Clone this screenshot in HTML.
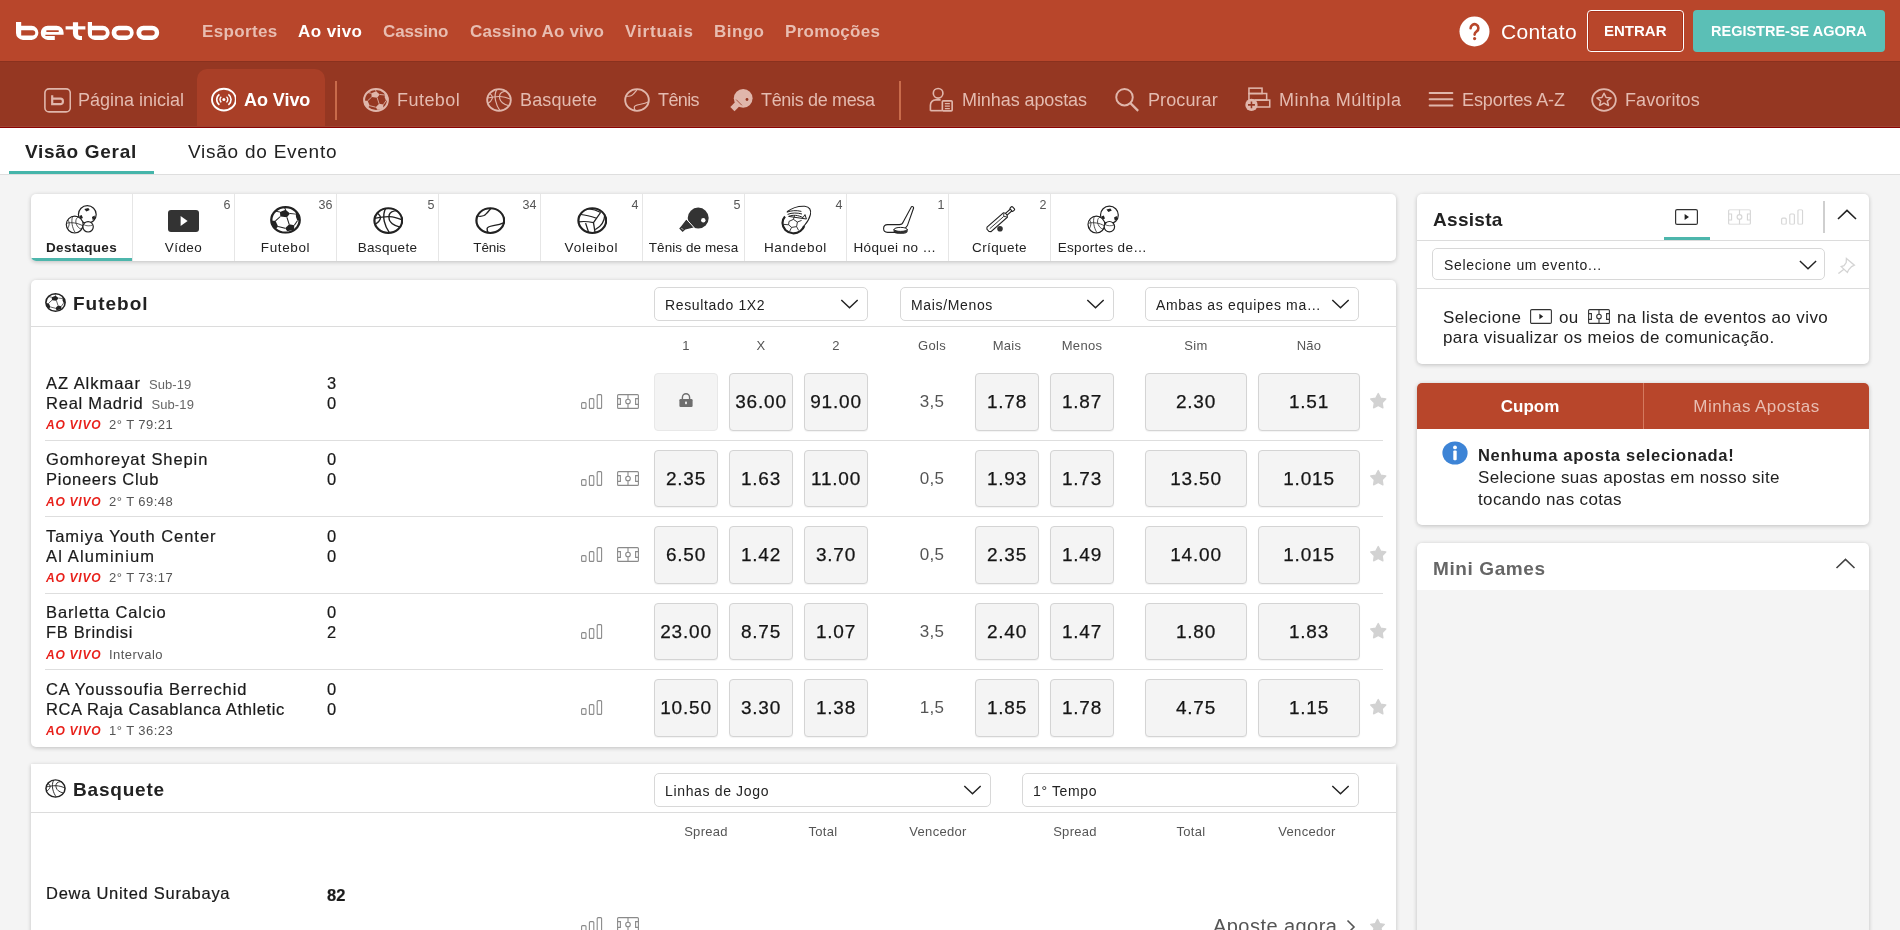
<!DOCTYPE html>
<html><head><meta charset="utf-8">
<style>
*{box-sizing:border-box;margin:0;padding:0}
html,body{width:1900px;height:930px;overflow:hidden;background:#f4f4f4;font-family:"Liberation Sans",sans-serif;color:#222;position:relative}
.abs{position:absolute}
.card,#top,#nav2,#tabs{will-change:transform}
.t{position:absolute;white-space:nowrap}
#top{position:absolute;left:0;top:0;width:1900px;height:61px;background:#b8462b}
#nav2{position:absolute;left:0;top:61px;width:1900px;height:66px;background:#953722;border-top:1px solid #8a311e}
#redline{position:absolute;left:0;top:126px;width:1900px;height:1px;background:#9c4431;border-bottom:1px solid #8c0202;height:2px}
#redshadow{position:absolute;left:0;top:128px;width:1900px;height:1px;background:rgba(80,0,0,.12)}
.tn{position:absolute;top:22.3px;font-size:17px;font-weight:700;color:#e8bdb1;white-space:nowrap;line-height:20px}
.n2{position:absolute;top:27.7px;font-size:18px;color:#e4bbb0;white-space:nowrap;line-height:20px}
.n2i{position:absolute;top:25px;width:26px;height:25px;color:#e0b6ab}
#tabs{position:absolute;left:0;top:128px;width:1900px;height:47px;background:#fff;border-bottom:1px solid #dedede}
.card{position:absolute;background:#fff;border-radius:5px;box-shadow:0 1px 4px rgba(0,0,0,.22)}
.cl{position:absolute;top:45.7px;text-align:center;font-size:13.5px;line-height:16px;color:#222;white-space:nowrap;letter-spacing:.3px}
.cc{position:absolute;top:4px;width:30px;text-align:right;font-size:12.5px;line-height:14px;color:#555}
.sel{position:absolute;height:34px;border:1px solid #d8d8d8;border-radius:5px;background:#fff}
.lab{position:absolute;width:80px;text-align:center;font-size:13px;line-height:16px;color:#555;letter-spacing:.3px}
.tm{position:absolute;font-size:16.5px;line-height:19px;color:#1a1a1a;-webkit-text-stroke:.2px #1a1a1a;white-space:nowrap;letter-spacing:.7px}
.tm .sub{font-size:13px;color:#666;-webkit-text-stroke:0;margin-left:8px;letter-spacing:.1px}
.sc{position:absolute;font-size:16.5px;line-height:19px;color:#1a1a1a;-webkit-text-stroke:.2px #1a1a1a}
.odd{position:absolute;height:57.5px;background:#f4f4f4;border:1px solid #d4d4d4;border-radius:4px;text-align:center;font-size:19px;line-height:55.5px;color:#151515;-webkit-text-stroke:.25px #151515;letter-spacing:.8px;box-shadow:0 1px 1px rgba(0,0,0,.05)}
.odd.lock{border-color:#e8e8e8;box-shadow:none}
.gols{position:absolute;width:60px;text-align:center;font-size:17px;line-height:20px;color:#555;letter-spacing:.3px}
</style></head><body>

<svg width="0" height="0" style="position:absolute">
<defs>
  <symbol id="ball" viewBox="0 0 26 26">
    <circle cx="13" cy="13" r="11.9" fill="none" stroke="currentColor" stroke-width="2"/>
    <path d="M8.3 5.7 L13.1 3.6 L16.8 7 L14.2 10.6 L8.7 9.8 Z" fill="currentColor"/>
    <path d="M21.6 5 L24.2 8.6 L25 13.4 L23 13.8 L21.8 10.2 Z" fill="currentColor"/>
    <path d="M1.2 13.9 L4.6 13.9 L6.8 19.2 L5 21.2 L2.2 18.6 Z" fill="currentColor"/>
    <path d="M12.7 20.8 L16.1 17.1 L20.4 18 L20.1 22.1 L14.5 23.6 Z" fill="currentColor"/>
    <path d="M13.1 3.6 L12.2 1.4 M16.8 7 L21.8 7.6 M14.2 10.6 L16.1 17.1 M8.7 9.8 L4.6 13.9 M6.8 19.2 L12.7 20.8 M20.4 18 L23 13.8 M8.3 5.7 L4.2 4.8" stroke="currentColor" stroke-width="0.9" fill="none"/>
  </symbol>
  <symbol id="bask" viewBox="0 0 26 26" fill="none" stroke="currentColor" stroke-width="1.9">
    <circle cx="13" cy="13" r="11.8"/>
    <path d="M1.3 10.9 C5 10 10 9 14 9.2 C18 9.4 21.6 10.8 24.9 12.3" stroke-width="1.2"/>
    <path d="M3.2 5.5 C5.6 7.4 6.8 9.6 6.2 11.4 C5.6 13.6 3.8 15.4 1.7 16.8" stroke-width="1.2"/>
    <path d="M10.7 1.5 C9 5 8.8 9.6 9.6 13.8 C10.4 18 12 21.6 14 24.7" stroke-width="1.2"/>
    <path d="M20.8 3.4 C17.4 3.6 14.6 4.4 13.8 7.4 C13 10.8 14.2 14 16.4 16 C18.2 17.6 20.6 18.6 23 19.3" stroke-width="1.2"/>
  </symbol>
  <symbol id="tennis" viewBox="0 0 26 26" fill="none" stroke="currentColor" stroke-width="1.9">
    <circle cx="13" cy="13" r="11.8"/>
    <path d="M13.6 1.2 C11.4 4 9.6 7 7.6 8.2 C5.8 9.2 3.8 9 1.6 8.6" stroke-width="1.2"/>
    <path d="M24.8 14.9 C21.6 16.6 18.6 17.2 15.5 17.8 C12.4 18.4 10.4 19.2 10.3 20.6 C10.2 22 10.6 23.4 11.2 24.6" stroke-width="1.2"/>
  </symbol>
  <symbol id="volley" viewBox="0 0 26 26" fill="none" stroke="currentColor" stroke-width="1.9">
    <circle cx="13" cy="13" r="11.8"/>
    <path d="M14 14.9 L20.2 5 M14 14.9 C10 14 5 13.6 1.6 14.2 M14 14.9 L15.4 24.8 M3.2 7.2 C7.6 7.6 12 9 16.6 10.8 M9.3 1.5 C13 2 17 3.2 19.8 5 M23.6 7.4 C23.4 13 20.6 18.6 15.6 21.6 M7.3 15.4 L10 24.6" stroke-width="1.1"/>
  </symbol>
  <symbol id="pong" viewBox="0 0 26 25">
    <circle cx="16.2" cy="11.3" r="9.4" fill="currentColor"/>
    <path d="M9.5 13.8 L13.7 18 L7.5 24.2 L3.3 20 Z" fill="currentColor"/>
    <path d="M9.2 12.6 L14.9 18.3" stroke="#953722" stroke-width="0.8"/>
    <circle cx="20" cy="12.5" r="1.4" fill="#953722"/>
  </symbol>
  <symbol id="mybets" viewBox="0 0 26 26" fill="none" stroke="currentColor" stroke-width="1.7">
    <circle cx="10" cy="6.6" r="5"/>
    <path d="M2 24.6 V19 C2 15.8 4.4 13.4 7.6 13.4 H12.6"/>
    <path d="M2 24.6 H14"/>
    <rect x="14.4" y="14.4" width="10.2" height="10.4" rx="1"/>
    <path d="M17 17.2 H22.2 M17 20 H22.2 M17 22.6 H22.2" stroke-width="1.3"/>
  </symbol>
  <symbol id="search" viewBox="0 0 26 26" fill="none" stroke="currentColor" stroke-width="2">
    <circle cx="10.4" cy="10.6" r="8.6"/>
    <path d="M16.8 17 L24.6 24.8" stroke-width="2.3"/>
  </symbol>
  <symbol id="multi" viewBox="0 0 26 26" fill="none" stroke="currentColor" stroke-width="1.6">
    <rect x="3.6" y="1.2" width="13.6" height="5.6"/>
    <rect x="3.6" y="6.8" width="18.4" height="6.8"/>
    <rect x="10.4" y="13.6" width="14.8" height="7.2"/>
    <circle cx="6.2" cy="18.6" r="6.4" fill="currentColor" stroke="none"/>
    <path d="M6.2 15 V22.2 M2.6 18.6 H9.8" stroke="#953722" stroke-width="1.6"/>
  </symbol>
  <symbol id="az" viewBox="0 0 26 26" fill="none" stroke="currentColor" stroke-width="2.1" stroke-linecap="round">
    <path d="M1.2 6.2 H24.8 M1.2 12.8 H24.8 M1.2 19.2 H24.8"/>
  </symbol>
  <symbol id="fav" viewBox="0 0 26 26" fill="none" stroke="currentColor" stroke-width="1.8">
    <circle cx="13" cy="13" r="11.8"/>
    <path d="M13 5.6 L15.1 10.3 L20.1 10.7 L16.3 14.1 L17.5 19.1 L13 16.4 L8.5 19.1 L9.7 14.1 L5.9 10.7 L10.9 10.3 Z" stroke-width="1.5" stroke-linejoin="round"/>
  </symbol>
  <symbol id="stats" viewBox="0 0 22 15" fill="none" stroke="currentColor" stroke-width="1.1">
    <rect x="0.6" y="8.6" width="4.4" height="5.8" rx="1"/>
    <rect x="8.4" y="4.6" width="4.4" height="9.8" rx="1"/>
    <rect x="16.2" y="0.6" width="4.4" height="13.8" rx="1"/>
  </symbol>
  <symbol id="field" viewBox="0 0 22 15" fill="none" stroke="currentColor" stroke-width="1.1">
    <rect x="0.6" y="0.6" width="20.8" height="13.8" rx="1"/>
    <path d="M11 0.6 V14.4 M0.6 4.6 H3.4 V10.4 H0.6 M21.4 4.6 H18.6 V10.4 H21.4"/>
    <circle cx="11" cy="7.5" r="2.3" fill="#fff"/>
  </symbol>
  <symbol id="star" viewBox="0 0 16 16">
    <path d="M8.00 1.40 L10.17 5.61 L14.85 6.38 L11.52 9.74 L12.23 14.42 L8.00 12.30 L3.77 14.42 L4.48 9.74 L1.15 6.38 L5.83 5.61 Z" fill="currentColor" stroke="currentColor" stroke-width="1.3" stroke-linejoin="round"/>
  </symbol>
  <symbol id="chev" viewBox="0 0 20 11" fill="none" stroke="currentColor" stroke-width="1.6">
    <path d="M1 1 L10 9.6 L19 1"/>
  </symbol>
  <symbol id="chevup" viewBox="0 0 20 11" fill="none" stroke="currentColor" stroke-width="1.6">
    <path d="M1 10 L10 1.4 L19 10"/>
  </symbol>
</defs>
</svg>

<div id="top">
  <svg class="abs" style="left:0;top:0" width="180" height="61" viewBox="0 0 180 61"><path fill="#fff" fill-rule="evenodd" d="M16 22 H21.2 V25.8 H31.6 A7 7 0 0 1 38.4 32.8 A7 7 0 0 1 31.6 39.9 H23 A7 7 0 0 1 16 32.9 Z M21.2 30.2 V35.5 H32.6 A2.65 2.65 0 0 0 32.6 30.2 Z M47.8 25.7 H56.6 A7 7 0 0 1 63.6 32.7 V34.8 H45.4 V35.9 H54.8 V39.9 H47.8 A7 7 0 0 1 40.8 32.9 V32.7 A7 7 0 0 1 47.8 25.7 Z M47 30.2 H58.1 A0.85 0.85 0 0 1 58.1 31.9 H47 A0.85 0.85 0 0 1 47 30.2 Z M72.9 22.3 H78.1 V26.2 H85.4 V29.4 H78.1 V33.4 A2.5 2.5 0 0 0 80.6 35.9 H82 V39.9 H79.6 A6.7 6.7 0 0 1 72.9 33.2 V29.4 H65.6 V26.2 H72.9 Z M87.8 22 H92 V25.8 H102.8 A7 7 0 0 1 109.7 32.8 A7 7 0 0 1 102.8 39.9 H94.8 A7 7 0 0 1 87.8 32.9 Z M92 30.2 V35.5 H103.2 A2.65 2.65 0 0 0 103.2 30.2 Z M118.6 25.8 H126.7 A7 7 0 0 1 133.7 32.85 A7 7 0 0 1 126.7 39.9 H118.6 A7 7 0 0 1 111.6 32.85 A7 7 0 0 1 118.6 25.8 Z M119 30.2 H127.3 A2.65 2.65 0 0 1 127.3 35.5 H119 A2.65 2.65 0 0 1 119 30.2 Z M143.4 25.8 H152.2 A7 7 0 0 1 159.2 32.85 A7 7 0 0 1 152.2 39.9 H143.4 A7 7 0 0 1 136.4 32.85 A7 7 0 0 1 143.4 25.8 Z M143.9 30.2 H152.1 A2.65 2.65 0 0 1 152.1 35.5 H143.9 A2.65 2.65 0 0 1 143.9 30.2 Z"/></svg>
  <div class="tn" style="left:202px;letter-spacing:0.35px">Esportes</div>
  <div class="tn" style="left:298px;color:#fff;letter-spacing:0.43px">Ao vivo</div>
  <div class="tn" style="left:383px;letter-spacing:-0.11px">Cassino</div>
  <div class="tn" style="left:470px;letter-spacing:0.17px">Cassino Ao vivo</div>
  <div class="tn" style="left:625px;letter-spacing:0.85px">Virtuais</div>
  <div class="tn" style="left:714px;letter-spacing:0.46px">Bingo</div>
  <div class="tn" style="left:785px;letter-spacing:0.3px">Promoções</div>
  <svg class="abs" style="left:1459px;top:16px" width="31" height="31" viewBox="0 0 31 31">
    <circle cx="15.5" cy="15.5" r="15" fill="#fff"/>
    <path d="M11.6 12.2 A3.9 3.9 0 1 1 17.6 15.4 C16.2 16.3 15.6 16.9 15.6 18.6" fill="none" stroke="#b8462b" stroke-width="2.6" stroke-linecap="round"/>
    <circle cx="15.6" cy="22.6" r="1.6" fill="#b8462b"/>
  </svg>
  <div class="t" style="left:1501px;top:20px;font-size:21px;color:#fff;line-height:24px;letter-spacing:.35px">Contato</div>
  <div class="abs" style="left:1587px;top:10px;width:96.5px;height:42px;border:1.6px solid #fff;border-radius:4px;box-shadow:inset 0 0 0 1px #a8321c"></div>
  <div class="t" style="left:1604px;top:23px;font-size:15px;font-weight:700;color:#fff;line-height:16px">ENTRAR</div>
  <div class="abs" style="left:1693px;top:10px;width:192px;height:42px;background:#5bbfb6;border-radius:4px"></div>
  <div class="t" style="left:1711px;top:23px;font-size:14.5px;font-weight:700;color:#fff;line-height:16px">REGISTRE-SE AGORA</div>
</div>
<div id="nav2">
  <svg class="abs" style="left:197px;top:7px" width="128" height="58"><path d="M0 58 V10 A10 10 0 0 1 10 0 H118 A10 10 0 0 1 128 10 V58 Z" fill="#a93f27"/></svg>
  <svg class="n2i" style="left:44px;top:25.5px;width:27px;height:25px" viewBox="0 0 27 25" fill="none" stroke="#e0b6ab" stroke-width="1.6">
    <rect x="0.9" y="0.9" width="25.4" height="23" rx="4.2"/>
    <path d="M8.2 7.2 V16.2 H16.4 A2.5 2.5 0 0 0 18.9 13.7 V13.2 A2.5 2.5 0 0 0 16.4 10.7 H8.2" stroke-width="2.2"/>
  </svg>
  <div class="n2" style="left:78px;letter-spacing:-0.01px">Página inicial</div>
  <svg class="n2i" style="left:210px" viewBox="0 0 26 25" fill="none" stroke="#fff" stroke-width="1.9">
    <ellipse cx="13.9" cy="12.6" rx="11.9" ry="10.9"/>
    <path d="M9.4 7.3 A6.6 6.6 0 0 0 9.4 17.9 M18.4 7.3 A6.6 6.6 0 0 1 18.4 17.9" stroke-width="1.6"/>
    <path d="M11.3 9.8 A3.6 3.6 0 0 0 11.3 15.4 M16.5 9.8 A3.6 3.6 0 0 1 16.5 15.4" stroke-width="1.4"/>
    <circle cx="13.9" cy="12.6" r="1.5" fill="#fff" stroke="none"/>
  </svg>
  <div class="n2" style="left:244px;color:#fff;font-weight:700;letter-spacing:-0.06px">Ao Vivo</div>
  <div class="abs" style="left:335px;top:19px;width:2px;height:39px;background:#c96b4b"></div>
  <svg class="n2i" style="left:363px;top:25.6px;height:24px" viewBox="0 0 26 26" preserveAspectRatio="none"><use href="#ball"/></svg>
  <div class="n2" style="left:397px;letter-spacing:0.46px">Futebol</div>
  <svg class="n2i" style="left:486px;top:25.6px;height:24px" viewBox="0 0 26 26" preserveAspectRatio="none"><use href="#bask"/></svg>
  <div class="n2" style="left:520px;letter-spacing:0.13px">Basquete</div>
  <svg class="n2i" style="left:624px;top:25.6px;height:24px" viewBox="0 0 26 26" preserveAspectRatio="none"><use href="#tennis"/></svg>
  <div class="n2" style="left:658px;letter-spacing:-0.6px">Tênis</div>
  <svg class="n2i" style="left:727px" viewBox="0 0 26 25"><use href="#pong"/></svg>
  <div class="n2" style="left:761px;letter-spacing:-0.34px">Tênis de mesa</div>
  <div class="abs" style="left:899px;top:19px;width:2px;height:39px;background:#c96b4b"></div>
  <svg class="n2i" style="left:928px" viewBox="0 0 26 25"><use href="#mybets"/></svg>
  <div class="n2" style="left:962px;letter-spacing:-0.08px">Minhas apostas</div>
  <svg class="n2i" style="left:1114px" viewBox="0 0 26 25"><use href="#search"/></svg>
  <div class="n2" style="left:1148px;letter-spacing:0.1px">Procurar</div>
  <svg class="n2i" style="left:1245px" viewBox="0 0 26 25"><use href="#multi"/></svg>
  <div class="n2" style="left:1279px;letter-spacing:0.46px">Minha Múltipla</div>
  <svg class="n2i" style="left:1428px" viewBox="0 0 26 25"><use href="#az"/></svg>
  <div class="n2" style="left:1462px;letter-spacing:-0.1px">Esportes A-Z</div>
  <svg class="n2i" style="left:1591px;top:25.6px;height:24px" viewBox="0 0 26 26" preserveAspectRatio="none"><use href="#fav"/></svg>
  <div class="n2" style="left:1625px;letter-spacing:0.08px">Favoritos</div>
</div>
<div id="redline"></div><div id="redshadow"></div>

<div id="tabs">
  <div class="t" style="left:25px;top:13px;font-size:19px;font-weight:700;letter-spacing:.7px;line-height:22px;color:#222">Visão Geral</div>
  <div class="abs" style="left:9px;top:43px;width:145px;height:3px;background:#45b5aa"></div>
  <div class="t" style="left:188px;top:13px;font-size:19px;letter-spacing:.75px;line-height:22px;color:#222">Visão do Evento</div>
</div>
<div class="card" id="carousel" style="left:31px;top:194px;width:1365px;height:67px;overflow:hidden">
  <div class="abs" style="left:0;top:64px;width:101px;height:3px;background:#4db6ac"></div>
  <div class="abs" style="left:101px;top:0;width:1px;height:67px;background:#e6e6e6"></div>
  <div class="abs" style="left:203px;top:0;width:1px;height:67px;background:#e6e6e6"></div>
  <div class="abs" style="left:305px;top:0;width:1px;height:67px;background:#e6e6e6"></div>
  <div class="abs" style="left:407px;top:0;width:1px;height:67px;background:#e6e6e6"></div>
  <div class="abs" style="left:509px;top:0;width:1px;height:67px;background:#e6e6e6"></div>
  <div class="abs" style="left:611px;top:0;width:1px;height:67px;background:#e6e6e6"></div>
  <div class="abs" style="left:713px;top:0;width:1px;height:67px;background:#e6e6e6"></div>
  <div class="abs" style="left:815px;top:0;width:1px;height:67px;background:#e6e6e6"></div>
  <div class="abs" style="left:917px;top:0;width:1px;height:67px;background:#e6e6e6"></div>
  <div class="abs" style="left:1019px;top:0;width:1px;height:67px;background:#e6e6e6"></div>
  <!-- icons -->
  <svg class="abs" style="left:33px;top:10px" width="36" height="32" viewBox="0 0 36 32" fill="none" stroke="#222" stroke-width="1.2">
    <circle cx="23.3" cy="10.5" r="8.9" fill="#fff"/>
    <path d="M20.3 4.9 L24.3 3.9000000000000004 L25.7 6.1 L22.3 7.5 Z M15.3 12.1 L17.700000000000003 10.9 L18.9 13.9 L16.700000000000003 15.1 Z M27.9 12.9 L30.700000000000003 11.5 L31.1 14.9 L28.700000000000003 15.9 Z" fill="#222" stroke="none"/>
    <circle cx="10.7" cy="20.6" r="8.4" fill="#fff"/>
    <path d="M2.6999999999999993 19.200000000000003 C7.699999999999999 18.0 13.7 19.0 18.9 21.8 M8.5 12.400000000000002 C7.1 17.6 8.1 23.6 11.299999999999999 28.8 M14.299999999999999 13.000000000000002 C11.299999999999999 14.600000000000001 11.1 18.6 13.299999999999999 22.0 C14.7 24.200000000000003 16.7 25.200000000000003 18.1 25.200000000000003 M3.6999999999999993 16.0 C5.699999999999999 17.6 5.699999999999999 21.6 3.499999999999999 24.6" stroke-width="0.8"/>
    <circle cx="24.1" cy="22.8" r="5.2" fill="#fff"/>
    <path d="M19.700000000000003 20.6 C22.1 22.2 26.1 22.2 28.700000000000003 21.0" stroke-width="0.7"/>
  </svg>
  <svg class="abs" style="left:137px;top:16px" width="31" height="22" viewBox="0 0 31 22">
    <rect x="0" y="0" width="31" height="22" rx="3" fill="#333"/>
    <path d="M12.6 6 L19.6 11 L12.6 16 Z" fill="#fff"/>
  </svg>
  <svg class="abs" style="left:239px;top:12.3px;color:#222" width="31" height="27.8" viewBox="0 0 26 26" preserveAspectRatio="none"><use href="#ball"/></svg>
  <svg class="abs" style="left:341.5px;top:12.5px;color:#222" width="30.6" height="27.2" viewBox="0 0 26 26" preserveAspectRatio="none"><use href="#bask"/></svg>
  <svg class="abs" style="left:443.5px;top:12.5px;color:#222" width="30.6" height="27.2" viewBox="0 0 26 26" preserveAspectRatio="none"><use href="#tennis"/></svg>
  <svg class="abs" style="left:545.5px;top:12.5px;color:#222" width="30.6" height="27.2" viewBox="0 0 26 26" preserveAspectRatio="none"><use href="#volley"/></svg>
  <svg class="abs" style="left:646px;top:12px" width="34" height="30" viewBox="0 0 34 30">
    <circle cx="21.2" cy="12.1" r="10.5" fill="#333"/>
    <path d="M9.4 13.4 L16.6 21.6 L8.4 23.6 L5.6 26 L2.2 22.6 L4.6 19.8 Z" fill="#333"/>
    <path d="M8.6 12.2 L17.8 22.4" stroke="#fff" stroke-width="1"/>
    <path d="M4.4 22 L6.2 23.8" stroke="#fff" stroke-width="0.7"/>
    <circle cx="26.3" cy="14.2" r="2.2" fill="#fff"/>
  </svg>
  <svg class="abs" style="left:749px;top:11px" width="34" height="30" viewBox="0 0 34 30" fill="none" stroke="#222">
    <path d="M5 11.4 C1.6 15 1.6 21 5.4 25 C9.4 29 16 29.4 20.4 26 C22.4 24.4 23.6 22.6 24.2 21" stroke-width="2.2"/>
    <path d="M7 6.8 C12 3 19 1 24.7 1.3 C29.6 1.8 31.4 5 30.4 9.6 C29.6 13 27 17.6 24 21" stroke-width="1.1"/>
    <path d="M6.8 7.2 C11 5.6 16 5 21.4 6.4 M7.6 9.4 C12 7.6 17 7.6 22 9 M8.6 11.4 C13 9.6 18 10 23 12.6 L25 9.6 L26.4 14 Z" stroke-width="1"/>
    <path d="M9 16.4 L13.4 14.4 L17.4 17 L16.6 21.6 L11.6 22.4 L8.6 19.8 Z M13.4 14.4 L14.6 10.6 M17.4 17 L21.6 15.4 M16.6 21.6 L18.6 25.4 M11.6 22.4 L9.6 26.4 M8.6 19.8 L4 19.4" stroke-width="0.9"/>
  </svg>
  <svg class="abs" style="left:851px;top:10px" width="34" height="30" viewBox="0 0 34 30" fill="none" stroke="#222" stroke-width="1.1">
    <path d="M29.4 2.8 C30.2 2.2 31.8 2.6 31.6 4 L25.4 21.6 L20 28.4 H5.6 C3 28.4 1.6 26.6 1.6 24.6 C1.6 22.4 3 20.6 5.6 20.6 H17.4 C19.4 20.6 20.6 19.8 21.2 18 Z" fill="#fff"/>
    <path d="M12.1 25.6 V27.2 A6.5 2 0 0 0 25.1 27.2 V25.6 Z" fill="#333"/>
    <ellipse cx="18.6" cy="25.4" rx="6.5" ry="2" fill="#fff" stroke-width="1"/>
  </svg>
  <svg class="abs" style="left:953px;top:10px" width="34" height="30" viewBox="0 0 34 30" fill="none" stroke="#222" stroke-width="1.1">
    <g transform="translate(5 25.4) rotate(-41.3)">
      <path d="M0 -3 H21.8 L23 -1.3 V1.3 L21.8 3 H0 L-1.4 1.6 V-1.6 Z" fill="#fff"/>
      <path d="M23 -1.2 H29.6 M23 1.2 H29.6" />
      <rect x="29.4" y="-2.2" width="3.2" height="4.4" rx="0.8" fill="#fff"/>
      <path d="M1 0 H19.6 L21.6 -2.2 M19.6 0 L21.6 2.2" stroke-width="0.8"/>
    </g>
    <circle cx="16" cy="24.7" r="2.8" fill="#333" stroke="none"/>
  </svg>
  <svg class="abs" style="left:1054px;top:10px" width="36" height="32" viewBox="0 0 36 32" fill="none" stroke="#222" stroke-width="1.2">
    <circle cx="24.4" cy="11" r="8.9" fill="#fff"/>
    <path d="M21.4 5.4 L25.4 4.4 L26.799999999999997 6.6 L23.4 8 Z M16.4 12.6 L18.799999999999997 11.4 L20.0 14.4 L17.799999999999997 15.6 Z M29.0 13.4 L31.799999999999997 12 L32.199999999999996 15.4 L29.799999999999997 16.4 Z" fill="#222" stroke="none"/>
    <circle cx="11.4" cy="20.6" r="8.4" fill="#fff"/>
    <path d="M3.4000000000000004 19.200000000000003 C8.4 18.0 14.4 19.0 19.6 21.8 M9.2 12.400000000000002 C7.800000000000001 17.6 8.8 23.6 12.0 28.8 M15.0 13.000000000000002 C12.0 14.600000000000001 11.8 18.6 14.0 22.0 C15.4 24.200000000000003 17.4 25.200000000000003 18.8 25.200000000000003 M4.4 16.0 C6.4 17.6 6.4 21.6 4.2 24.6" stroke-width="0.8"/>
    <circle cx="24.4" cy="22.7" r="5.2" fill="#fff"/>
    <path d="M20.0 20.5 C22.4 22.099999999999998 26.4 22.099999999999998 29.0 20.9" stroke-width="0.7"/>
  </svg>
  <!-- labels -->
  <div class="cl" style="left:0;width:101px;font-weight:700;letter-spacing:0.29px">Destaques</div>
  <div class="cl" style="left:102px;width:101px;letter-spacing:0.43px">Vídeo</div>
  <div class="cl" style="left:204px;width:101px;letter-spacing:0.61px">Futebol</div>
  <div class="cl" style="left:306px;width:101px;letter-spacing:0.33px">Basquete</div>
  <div class="cl" style="left:408px;width:101px;letter-spacing:-0.1px">Tênis</div>
  <div class="cl" style="left:510px;width:101px;letter-spacing:0.81px">Voleibol</div>
  <div class="cl" style="left:612px;width:101px;letter-spacing:0.07px">Tênis de mesa</div>
  <div class="cl" style="left:714px;width:101px;letter-spacing:0.66px">Handebol</div>
  <div class="cl" style="left:822.4px;text-align:left;letter-spacing:0.39px">Hóquei no …</div>
  <div class="cl" style="left:918px;width:101px;letter-spacing:0.4px">Críquete</div>
  <div class="cl" style="left:1026.7px;text-align:left;letter-spacing:0.32px">Esportes de…</div>
  <div class="cc" style="left:169.5px">6</div>
  <div class="cc" style="left:271.5px">36</div>
  <div class="cc" style="left:373.5px">5</div>
  <div class="cc" style="left:475.5px">34</div>
  <div class="cc" style="left:577.5px">4</div>
  <div class="cc" style="left:679.5px">5</div>
  <div class="cc" style="left:781.5px">4</div>
  <div class="cc" style="left:883.5px">1</div>
  <div class="cc" style="left:985.5px">2</div>
</div>

<div class="card" style="left:31px;top:280px;width:1365px;height:467px">
<svg class="abs" style="left:14.2px;top:12.5px;color:#222" width="21" height="19" viewBox="0 0 26 26" preserveAspectRatio="none"><use href="#ball"/></svg>
<div class="t" style="left:42px;top:12.7px;font-size:19px;font-weight:700;line-height:22px;letter-spacing:1px">Futebol</div>
<div class="abs" style="left:0;top:46px;width:1365px;height:1px;background:#dcdcdc"></div>
<div class="sel" style="left:623px;top:7px;width:214px"></div><div class="t" style="left:634px;top:15.8px;font-size:14px;line-height:18px;letter-spacing:0.65px;color:#222">Resultado 1X2</div><svg class="abs" style="left:809px;top:19px;color:#222" width="19" height="10" viewBox="0 0 20 11"><use href="#chev"/></svg>
<div class="sel" style="left:869px;top:7px;width:214px"></div><div class="t" style="left:880px;top:15.8px;font-size:14px;line-height:18px;letter-spacing:0.65px;color:#222">Mais/Menos</div><svg class="abs" style="left:1055px;top:19px;color:#222" width="19" height="10" viewBox="0 0 20 11"><use href="#chev"/></svg>
<div class="sel" style="left:1114px;top:7px;width:214px"></div><div class="t" style="left:1125px;top:15.8px;font-size:14px;line-height:18px;letter-spacing:0.65px;color:#222">Ambas as equipes ma…</div><svg class="abs" style="left:1300px;top:19px;color:#222" width="19" height="10" viewBox="0 0 20 11"><use href="#chev"/></svg>
<div class="lab" style="left:615px;top:58.1px">1</div>
<div class="lab" style="left:690px;top:58.1px">X</div>
<div class="lab" style="left:765px;top:58.1px">2</div>
<div class="lab" style="left:861px;top:58.1px">Gols</div>
<div class="lab" style="left:936px;top:58.1px">Mais</div>
<div class="lab" style="left:1011px;top:58.1px">Menos</div>
<div class="lab" style="left:1125px;top:58.1px">Sim</div>
<div class="lab" style="left:1238px;top:58.1px">Não</div>
<div class="tm" style="left:15px;top:93.9px;letter-spacing:0.96px">AZ Alkmaar<span class="sub">Sub-19</span></div>
<div class="tm" style="left:15px;top:113.6px;letter-spacing:0.77px">Real Madrid<span class="sub">Sub-19</span></div>
<div class="sc" style="left:296px;top:93.9px">3</div>
<div class="sc" style="left:296px;top:113.6px">0</div>
<div class="t" style="left:15px;top:138.4px;line-height:14px;font-size:12px;font-weight:700;font-style:italic;color:#e8201a;letter-spacing:.75px">AO VIVO</div>
<div class="t" style="left:78px;top:138.1px;line-height:14px;font-size:13px;color:#555;letter-spacing:.45px">2° T 79:21</div>
<svg class="abs" style="left:550px;top:114.0px;color:#8a8a8a" width="22" height="15"><use href="#stats"/></svg>
<svg class="abs" style="left:586px;top:114.0px;color:#8a8a8a" width="22" height="15"><use href="#field"/></svg>
<div class="odd lock" style="left:623px;top:93.0px;width:64px"><svg width="14" height="16" viewBox="0 0 14 16" style="margin-top:17.5px"><path d="M3.4 7.4 V5.4 A3.6 3.6 0 0 1 10.6 5.4 V7.4" fill="none" stroke="#6e6e6e" stroke-width="1.4"/><rect x="0.4" y="7" width="13.2" height="8" rx="1.2" fill="#6e6e6e"/><rect x="6.1" y="9.4" width="1.8" height="2.8" rx="0.6" fill="#f4f4f4"/></svg></div>
<div class="odd" style="left:698px;top:93.0px;width:64px">36.00</div>
<div class="odd" style="left:773px;top:93.0px;width:64px">91.00</div>
<div class="odd" style="left:944px;top:93.0px;width:64px">1.78</div>
<div class="odd" style="left:1019px;top:93.0px;width:64px">1.87</div>
<div class="odd" style="left:1114px;top:93.0px;width:102px">2.30</div>
<div class="odd" style="left:1227px;top:93.0px;width:102px">1.51</div>
<div class="gols" style="left:871px;top:112.4px">3,5</div>
<svg class="abs" style="left:1337.5px;top:112.2px;color:#d2d2d2" width="18.5" height="17.5" viewBox="0 0 16 16"><use href="#star"/></svg>
<div class="abs" style="left:14px;top:159.6px;width:1338px;height:1.4px;background:#dedede"></div>
<div class="tm" style="left:15px;top:170.4px;letter-spacing:0.91px">Gomhoreyat Shepin</div>
<div class="tm" style="left:15px;top:190.1px;letter-spacing:0.73px">Pioneers Club</div>
<div class="sc" style="left:296px;top:170.4px">0</div>
<div class="sc" style="left:296px;top:190.1px">0</div>
<div class="t" style="left:15px;top:214.9px;line-height:14px;font-size:12px;font-weight:700;font-style:italic;color:#e8201a;letter-spacing:.75px">AO VIVO</div>
<div class="t" style="left:78px;top:214.6px;line-height:14px;font-size:13px;color:#555;letter-spacing:.45px">2° T 69:48</div>
<svg class="abs" style="left:550px;top:190.5px;color:#8a8a8a" width="22" height="15"><use href="#stats"/></svg>
<svg class="abs" style="left:586px;top:190.5px;color:#8a8a8a" width="22" height="15"><use href="#field"/></svg>
<div class="odd" style="left:623px;top:169.5px;width:64px">2.35</div>
<div class="odd" style="left:698px;top:169.5px;width:64px">1.63</div>
<div class="odd" style="left:773px;top:169.5px;width:64px">11.00</div>
<div class="odd" style="left:944px;top:169.5px;width:64px">1.93</div>
<div class="odd" style="left:1019px;top:169.5px;width:64px">1.73</div>
<div class="odd" style="left:1114px;top:169.5px;width:102px">13.50</div>
<div class="odd" style="left:1227px;top:169.5px;width:102px">1.015</div>
<div class="gols" style="left:871px;top:188.9px">0,5</div>
<svg class="abs" style="left:1337.5px;top:188.7px;color:#d2d2d2" width="18.5" height="17.5" viewBox="0 0 16 16"><use href="#star"/></svg>
<div class="abs" style="left:14px;top:236.1px;width:1338px;height:1.4px;background:#dedede"></div>
<div class="tm" style="left:15px;top:246.9px;letter-spacing:0.96px">Tamiya Youth Center</div>
<div class="tm" style="left:15px;top:266.6px;letter-spacing:1.15px">Al Aluminium</div>
<div class="sc" style="left:296px;top:246.9px">0</div>
<div class="sc" style="left:296px;top:266.6px">0</div>
<div class="t" style="left:15px;top:291.4px;line-height:14px;font-size:12px;font-weight:700;font-style:italic;color:#e8201a;letter-spacing:.75px">AO VIVO</div>
<div class="t" style="left:78px;top:291.1px;line-height:14px;font-size:13px;color:#555;letter-spacing:.45px">2° T 73:17</div>
<svg class="abs" style="left:550px;top:267.0px;color:#8a8a8a" width="22" height="15"><use href="#stats"/></svg>
<svg class="abs" style="left:586px;top:267.0px;color:#8a8a8a" width="22" height="15"><use href="#field"/></svg>
<div class="odd" style="left:623px;top:246.0px;width:64px">6.50</div>
<div class="odd" style="left:698px;top:246.0px;width:64px">1.42</div>
<div class="odd" style="left:773px;top:246.0px;width:64px">3.70</div>
<div class="odd" style="left:944px;top:246.0px;width:64px">2.35</div>
<div class="odd" style="left:1019px;top:246.0px;width:64px">1.49</div>
<div class="odd" style="left:1114px;top:246.0px;width:102px">14.00</div>
<div class="odd" style="left:1227px;top:246.0px;width:102px">1.015</div>
<div class="gols" style="left:871px;top:265.4px">0,5</div>
<svg class="abs" style="left:1337.5px;top:265.2px;color:#d2d2d2" width="18.5" height="17.5" viewBox="0 0 16 16"><use href="#star"/></svg>
<div class="abs" style="left:14px;top:312.6px;width:1338px;height:1.4px;background:#dedede"></div>
<div class="tm" style="left:15px;top:323.4px;letter-spacing:0.89px">Barletta Calcio</div>
<div class="tm" style="left:15px;top:343.1px;letter-spacing:0.66px">FB Brindisi</div>
<div class="sc" style="left:296px;top:323.4px">0</div>
<div class="sc" style="left:296px;top:343.1px">2</div>
<div class="t" style="left:15px;top:367.9px;line-height:14px;font-size:12px;font-weight:700;font-style:italic;color:#e8201a;letter-spacing:.75px">AO VIVO</div>
<div class="t" style="left:78px;top:367.6px;line-height:14px;font-size:13px;color:#555;letter-spacing:.45px">Intervalo</div>
<svg class="abs" style="left:550px;top:343.5px;color:#8a8a8a" width="22" height="15"><use href="#stats"/></svg>
<div class="odd" style="left:623px;top:322.5px;width:64px">23.00</div>
<div class="odd" style="left:698px;top:322.5px;width:64px">8.75</div>
<div class="odd" style="left:773px;top:322.5px;width:64px">1.07</div>
<div class="odd" style="left:944px;top:322.5px;width:64px">2.40</div>
<div class="odd" style="left:1019px;top:322.5px;width:64px">1.47</div>
<div class="odd" style="left:1114px;top:322.5px;width:102px">1.80</div>
<div class="odd" style="left:1227px;top:322.5px;width:102px">1.83</div>
<div class="gols" style="left:871px;top:341.9px">3,5</div>
<svg class="abs" style="left:1337.5px;top:341.7px;color:#d2d2d2" width="18.5" height="17.5" viewBox="0 0 16 16"><use href="#star"/></svg>
<div class="abs" style="left:14px;top:389.1px;width:1338px;height:1.4px;background:#dedede"></div>
<div class="tm" style="left:15px;top:399.9px;letter-spacing:0.85px">CA Youssoufia Berrechid</div>
<div class="tm" style="left:15px;top:419.6px;letter-spacing:0.6px">RCA Raja Casablanca Athletic</div>
<div class="sc" style="left:296px;top:399.9px">0</div>
<div class="sc" style="left:296px;top:419.6px">0</div>
<div class="t" style="left:15px;top:444.4px;line-height:14px;font-size:12px;font-weight:700;font-style:italic;color:#e8201a;letter-spacing:.75px">AO VIVO</div>
<div class="t" style="left:78px;top:444.1px;line-height:14px;font-size:13px;color:#555;letter-spacing:.45px">1° T 36:23</div>
<svg class="abs" style="left:550px;top:420.0px;color:#8a8a8a" width="22" height="15"><use href="#stats"/></svg>
<div class="odd" style="left:623px;top:399.0px;width:64px">10.50</div>
<div class="odd" style="left:698px;top:399.0px;width:64px">3.30</div>
<div class="odd" style="left:773px;top:399.0px;width:64px">1.38</div>
<div class="odd" style="left:944px;top:399.0px;width:64px">1.85</div>
<div class="odd" style="left:1019px;top:399.0px;width:64px">1.78</div>
<div class="odd" style="left:1114px;top:399.0px;width:102px">4.75</div>
<div class="odd" style="left:1227px;top:399.0px;width:102px">1.15</div>
<div class="gols" style="left:871px;top:418.4px">1,5</div>
<svg class="abs" style="left:1337.5px;top:418.2px;color:#d2d2d2" width="18.5" height="17.5" viewBox="0 0 16 16"><use href="#star"/></svg>
</div>
<div class="card" style="left:31px;top:764px;width:1365px;height:200px;border-radius:0"><div class="abs" style="left:0;top:2px;width:1365px;height:198px">
<svg class="abs" style="left:14.2px;top:12.5px;color:#222" width="21" height="19" viewBox="0 0 26 26" preserveAspectRatio="none"><use href="#bask"/></svg>
<div class="t" style="left:42px;top:12.7px;font-size:19px;font-weight:700;line-height:22px;letter-spacing:.8px">Basquete</div>
<div class="abs" style="left:0;top:46px;width:1365px;height:1px;background:#dcdcdc"></div>
<div class="sel" style="left:623px;top:7px;width:337px"></div><div class="t" style="left:634px;top:15.8px;font-size:14px;line-height:18px;letter-spacing:0.65px;color:#222">Linhas de Jogo</div><svg class="abs" style="left:932px;top:19px;color:#222" width="19" height="10" viewBox="0 0 20 11"><use href="#chev"/></svg>
<div class="sel" style="left:991px;top:7px;width:337px"></div><div class="t" style="left:1002px;top:15.8px;font-size:14px;line-height:18px;letter-spacing:0.65px;color:#222">1° Tempo</div><svg class="abs" style="left:1300px;top:19px;color:#222" width="19" height="10" viewBox="0 0 20 11"><use href="#chev"/></svg>
<div class="lab" style="left:635px;top:58.1px">Spread</div>
<div class="lab" style="left:752px;top:58.1px">Total</div>
<div class="lab" style="left:867px;top:58.1px">Vencedor</div>
<div class="lab" style="left:1004px;top:58.1px">Spread</div>
<div class="lab" style="left:1120px;top:58.1px">Total</div>
<div class="lab" style="left:1236px;top:58.1px">Vencedor</div>
<div class="tm" style="left:15px;top:118.0px;letter-spacing:0.73px">Dewa United Surabaya</div>
<div class="sc" style="left:296px;top:120.0px;font-weight:700">82</div>
<svg class="abs" style="left:550px;top:151px;color:#8a8a8a" width="22" height="15"><use href="#stats"/></svg>
<svg class="abs" style="left:586px;top:151px;color:#8a8a8a" width="22" height="15"><use href="#field"/></svg>
<div class="t" style="left:1182px;top:149.3px;font-size:20px;line-height:22px;color:#555;letter-spacing:.45px">Aposte agora</div>
<svg class="abs" style="left:1315px;top:153px" width="10" height="16" viewBox="0 0 10 16"><path d="M1.5 1.5 L8 8 L1.5 14.5" fill="none" stroke="#555" stroke-width="1.6"/></svg>
<svg class="abs" style="left:1338px;top:152px;color:#d0d0d0" width="17" height="16" viewBox="0 0 16 16"><use href="#star"/></svg>
</div></div>
<div class="card" style="left:1417px;top:194px;width:452px;height:170px">
  <div class="t" style="left:16px;top:14.8px;font-size:19px;font-weight:700;line-height:22px;letter-spacing:.3px">Assista</div>
  <svg class="abs" style="left:258px;top:15px" width="23" height="16" viewBox="0 0 23 16"><rect x="0.6" y="0.6" width="21.8" height="14.8" rx="1.5" fill="none" stroke="#333" stroke-width="1.2"/><path d="M9.6 5 L14 8 L9.6 11 Z" fill="#222"/></svg>
  <svg class="abs" style="left:311px;top:15px;color:#d6d6d6" width="23" height="16" viewBox="0 0 22 15"><use href="#field"/></svg>
  <svg class="abs" style="left:364px;top:15px;color:#d6d6d6" width="23" height="16" viewBox="0 0 22 15"><use href="#stats"/></svg>
  <div class="abs" style="left:247px;top:43px;width:46px;height:3px;background:#4db6ac"></div>
  <div class="abs" style="left:406px;top:7px;width:1.5px;height:32px;background:#cfcfcf"></div>
  <svg class="abs" style="left:420px;top:15px;color:#222" width="20" height="11" viewBox="0 0 20 11"><use href="#chevup"/></svg>
  <div class="abs" style="left:0;top:46px;width:452px;height:1px;background:#dcdcdc"></div>
  <div class="sel" style="left:15px;top:54px;width:393px;height:32px"></div>
  <div class="t" style="left:27px;top:63.1px;font-size:14px;line-height:16px;letter-spacing:.7px">Selecione um evento...</div>
  <svg class="abs" style="left:382px;top:66px;color:#222" width="18" height="10" viewBox="0 0 20 11"><use href="#chev"/></svg>
  <svg class="abs" style="left:419px;top:63px" width="20" height="17" viewBox="0 0 20 17" fill="none" stroke="#d4d4d4" stroke-width="1.3"><path d="M10.4 1.4 L18.4 8.2 L15.6 9.6 L12.6 12.8 L11.4 15.4 L5.2 9.6 L8 8.6 L10.2 5.6 Z M7.6 12.4 L2.4 16.6"/></svg>
  <div class="abs" style="left:0;top:94px;width:452px;height:1px;background:#dcdcdc"></div>
  <div class="t" style="left:26px;top:115.4px;font-size:17px;line-height:18px;letter-spacing:.4px">Selecione</div>
  <svg class="abs" style="left:113px;top:115px" width="22" height="15" viewBox="0 0 22 15"><rect x="0.6" y="0.6" width="20.8" height="13.8" rx="1.2" fill="none" stroke="#333" stroke-width="1.1"/><path d="M9.4 4.8 L13.2 7.5 L9.4 10.2 Z" fill="#222"/></svg>
  <div class="t" style="left:142px;top:115.4px;font-size:17px;line-height:18px;letter-spacing:.4px">ou</div>
  <svg class="abs" style="left:171px;top:115px;color:#333" width="22" height="15" viewBox="0 0 22 15"><use href="#field"/></svg>
  <div class="t" style="left:200px;top:115.4px;font-size:17px;line-height:18px;letter-spacing:.4px">na lista de eventos ao vivo</div>
  <div class="t" style="left:26px;top:134.8px;font-size:17px;line-height:18px;letter-spacing:.4px">para visualizar os meios de comunicação.</div>
</div>
<div class="card" style="left:1417px;top:383px;width:452px;height:141.5px;overflow:hidden">
  <div class="abs" style="left:0;top:0;width:452px;height:46px;background:#b8462b"></div>
  <div class="abs" style="left:226px;top:0;width:1px;height:46px;background:#d47a5f"></div>
  <div class="t" style="left:0;width:226px;text-align:center;top:15.3px;font-size:17px;font-weight:700;line-height:18px;color:#fff">Cupom</div>
  <div class="t" style="left:227px;width:225px;text-align:center;top:15.3px;font-size:17px;line-height:18px;color:#e8bdb1;letter-spacing:.45px">Minhas Apostas</div>
  <svg class="abs" style="left:25px;top:58px" width="26" height="24" viewBox="0 0 26 24"><ellipse cx="13" cy="12" rx="12.6" ry="11.6" fill="#3d84d6"/><circle cx="13" cy="6.4" r="1.9" fill="#fff"/><rect x="11.3" y="9.6" width="3.4" height="9.6" rx="1" fill="#fff"/></svg>
  <div class="t" style="left:61px;top:63px;font-size:16.5px;font-weight:700;line-height:18px;letter-spacing:.7px">Nenhuma aposta selecionada!</div>
  <div class="t" style="left:61px;top:86px;font-size:17px;line-height:18px;letter-spacing:.35px">Selecione suas apostas em nosso site</div>
  <div class="t" style="left:61px;top:108px;font-size:17px;line-height:18px;letter-spacing:.35px">tocando nas cotas</div>
</div>
<div class="card" style="left:1417px;top:543px;width:452px;height:400px;overflow:hidden">
  <div class="abs" style="left:0;top:47px;width:452px;height:360px;background:#f4f4f4"></div>
  <div class="t" style="left:16px;top:15px;font-size:19px;font-weight:700;line-height:22px;color:#666;letter-spacing:.6px">Mini Games</div>
  <svg class="abs" style="left:418px;top:15px;color:#444" width="21" height="11" viewBox="0 0 20 11"><use href="#chevup"/></svg>
</div>

</body></html>
